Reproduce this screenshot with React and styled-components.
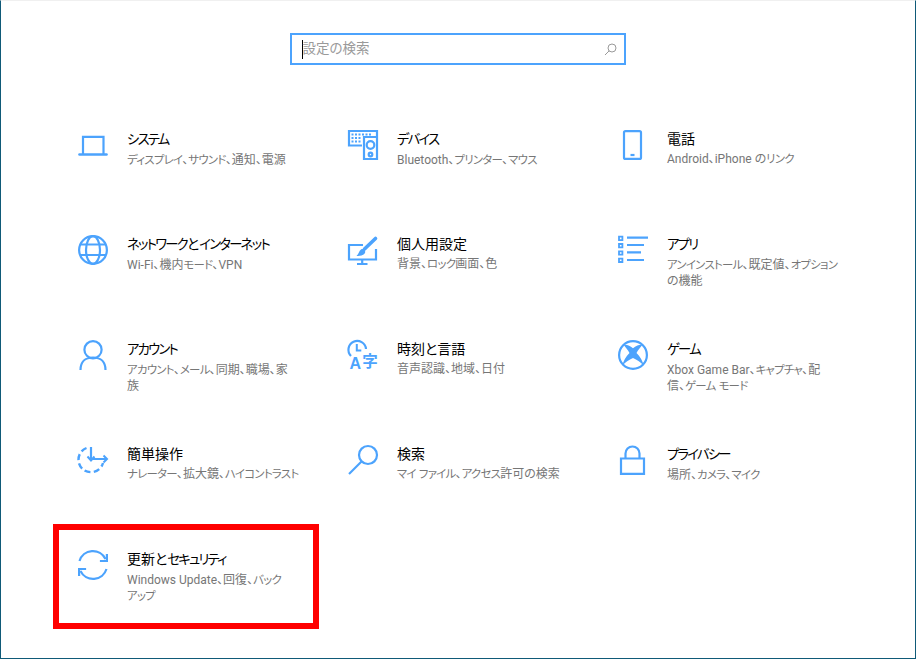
import React from "react";
import styled, { createGlobalStyle } from "styled-components";

const Global = createGlobalStyle`
  html, body { margin: 0; padding: 0; background: #fff; }
  * { box-sizing: border-box; }
`;
const FONT = `Roboto, "Noto Sans CJK JP", sans-serif`;
const ACCENT = "#4ca3fd";

const Page = styled.div`
  position: relative;
  width: 916px;
  height: 659px;
  background: #fff;
  border: 1px solid #0f5a78;
  border-top: 1px solid #f0f0f0;
  font-family: ${FONT};
  font-feature-settings: "palt";
  overflow: hidden;
`;
const SearchRow = styled.div`
  display: flex;
  justify-content: center;
  padding-top: 32px;
  padding-right: 1px;
`;
const SearchBox = styled.div`
  width: 336px;
  height: 32px;
  border: 2px solid ${ACCENT};
  display: flex;
  align-items: center;
  padding: 0 7px 0 10px;
  color: #9a9a9a;
  font-size: 13.5px;
`;
const Caret = styled.span`
  width: 1px;
  height: 19px;
  background: #000;
`;
const Placeholder = styled.span`
  flex: 1;
  margin-top: -4px;
`;
const Grid = styled.div`
  display: grid;
  grid-template-columns: repeat(3, 270px);
  grid-auto-rows: 105px;
  padding: 65px 0 0 77px;
`;
const Tile = styled.div`
  display: grid;
  grid-template-columns: 30px 1fr;
  column-gap: 19px;
  align-items: start;
`;
const IconWrap = styled.div`
  width: 30px;
  height: 30px;
  color: ${ACCENT};
`;
const TextCol = styled.div`
  margin-top: -1px;
`;
const Title = styled.div`
  font-size: 14px;
  line-height: 20px;
  color: #000;
`;
const Desc = styled.div`
  font-size: 12px;
  line-height: 16px;
  margin-top: 2px;
  color: #767676;
`;
const DescLine = styled.span`
  display: block;
  white-space: nowrap;
`;
const Kana = styled.span`
  font-size: 0.95em;
  letter-spacing: ${(p) => p.$track}em;
`;
const Highlight = styled.div`
  position: absolute;
  left: 52px;
  top: 523px;
  width: 266px;
  height: 105px;
  border: 6px solid #ff0000;
  pointer-events: none;
`;

const IconSvg = styled.svg`
  display: block;
  overflow: visible;
`;
const Svg = ({ children }) => (
  <IconSvg width="30" height="30" viewBox="0 0 30 30" fill="none" stroke="currentColor" strokeWidth="2.2">
    {children}
  </IconSvg>
);

const IconLabel = styled.text`
  font-family: "Liberation Sans", "Noto Sans CJK JP", sans-serif;
  fill: currentColor;
  stroke: none;
`;

const icons = {
  laptop: (
    <Svg>
      <path d="M5 24V6.800h20.500V24" />
      <path d="M1.500 24.500h27" strokeWidth="2.600" strokeLinecap="round" />
    </Svg>
  ),
  devices: (
    <Svg>
      <path d="M14 15.500H1V1h28v5" />
      <path d="M16 7h13v22H16z" />
      <circle cx="22.500" cy="15" r="3.800" />
      <circle cx="22.500" cy="24.500" r="1.800" />
      <path d="M3.500 4.500h2m1.500 0h2m1.500 0h2m1.500 0h2m1.500 0h2m1.500 0h2M3.500 8h2m1.500 0h2m1.500 0h2M3.500 11.500h2m1.500 0h2m1.500 0h2" strokeWidth="1.800" />
    </Svg>
  ),
  phone: (
    <Svg>
      <rect x="6" y="1.100" width="17" height="27.800" rx="1.500" />
      <path d="M12.500 25h4" />
    </Svg>
  ),
  globe: (
    <Svg>
      <circle cx="15" cy="15" r="13.900" />
      <ellipse cx="15" cy="15" rx="7" ry="13.900" />
      <path d="M2.500 9.500h25M2.500 20h25" />
    </Svg>
  ),
  personalize: (
    <Svg>
      <path d="M15 10H1v14.500h27V14" />
      <path d="M9 29h10.500M14.200 24.500V29" />
      <path d="M27.500 3.500 16.500 14" strokeWidth="3.600" strokeLinecap="round" />
      <path d="M13 14.500c2.500-1.300 5 1 4 3.500-1 2.300-6 3.500-8.500 2.800 2-1.300 2.500-5 4.500-6.300z" fill="currentColor" stroke="none" />
    </Svg>
  ),
  apps: (
    <Svg>
      <path d="M1 1.700h3.400v3.400H1zM1 9h3.400v3.400H1zM1 16.300h3.400v3.400H1zM1 23.600h3.400V27H1z" strokeWidth="1.800" />
      <path d="M9 2.700h21M9 10h17M9 17.300h14M9 25h17" />
    </Svg>
  ),
  person: (
    <Svg>
      <circle cx="15" cy="9.700" r="8.600" />
      <path d="M2.500 30c0-8 4.500-12.500 12.500-12.500S27.500 22 27.500 30" />
    </Svg>
  ),
  clockLang: (
    <Svg>
      <path d="M3 16A8.800 8.800 0 1 1 18 9" />
      <path d="M8.800 4v6.500h4.500" strokeWidth="2" />
      <IconLabel x="1.500" y="29" fontSize="16" fontWeight="700">A</IconLabel>
      <IconLabel x="14.300" y="26.500" fontSize="15.500" fontWeight="700">字</IconLabel>
    </Svg>
  ),
  xbox: (
    <Svg>
      <circle cx="15" cy="15" r="13.900" />
      <path d="M5.500 4.500C9 4.500 12.500 6 15 8.300 17.500 6 21 4.500 24.500 4.500 22.500 7.500 20 10 18.500 13 22 16.500 25 21 25.500 25.500 23 22.500 19 19.500 15 18 11 19.500 7 22.500 4.500 25.500 5 21 8 16.500 11.500 13 10 10 7.500 7.500 5.500 4.500Z" fill="currentColor" stroke="none" />
    </Svg>
  ),
  access: (
    <Svg>
      <path d="M13 2v13" />
      <path d="M9.500 11.500 13 15.500l3.500-4" strokeWidth="2" />
      <path d="M13 14h16M25.500 10.500 29 14l-3.500 3.500" strokeWidth="2" />
      <path d="M8.500 3A12.500 12.500 0 1 0 25 18" strokeWidth="2.400" strokeDasharray="6 3.300" />
    </Svg>
  ),
  search: (
    <Svg>
      <circle cx="20" cy="10" r="9" />
      <path d="M13.500 16.500 1 29" />
    </Svg>
  ),
  lock: (
    <Svg>
      <path d="M3 13.500h23v15.400H3z" />
      <path d="M7.500 13.500V8.500a7 7 0 0 1 14 0v5" />
    </Svg>
  ),
  update: (
    <Svg>
      <path d="M1.500 11A14 14 0 0 1 27.500 9" />
      <path d="M28.900 4v7h-7" />
      <path d="M28.500 19A14 14 0 0 1 2.500 21" />
      <path d="M1.100 26v-7h7" />
    </Svg>
  ),
};

const items = [
  ["laptop", "システム", "ディスプレイ、サウンド、通知、電源"],
  ["devices", "デバイス", "Bluetooth、プリンター、マウス"],
  ["phone", "電話", "Android、iPhone のリンク"],
  ["globe", "ネットワークとインターネット", "Wi-Fi、機内モード、VPN"],
  ["personalize", "個人用設定", "背景、ロック画面、色"],
  ["apps", "アプリ", "アンインストール、既定値、オプション\nの機能"],
  ["person", "アカウント", "アカウント、メール、同期、職場、家\n族"],
  ["clockLang", "時刻と言語", "音声認識、地域、日付"],
  ["xbox", "ゲーム", "Xbox Game Bar、キャプチャ、配\n信、ゲーム モード"],
  ["access", "簡単操作", "ナレーター、拡大鏡、ハイコントラスト"],
  ["search", "検索", "マイ ファイル、アクセス許可の検索"],
  ["lock", "プライバシー", "場所、カメラ、マイク"],
  ["update", "更新とセキュリティ", "Windows Update、回復、バック\nアップ"],
];

const Tight = ({ text, track }) =>
  text.split(/([\u30a0-\u30ff]+)/).map((part, i) =>
    i % 2 ? <Kana key={i} $track={track}>{part}</Kana> : part
  );

const SearchGlyph = () => (
  <svg width="13" height="13" viewBox="0 0 13 13" fill="none" stroke="#9a9a9a" strokeWidth="1">
    <circle cx="8" cy="5" r="4" />
    <path d="M5.200 7.800 1 12" />
  </svg>
);

export default function App() {
  return (
    <Page>
      <Global />
      <SearchRow>
        <SearchBox>
          <Caret />
          <Placeholder>設定の検索</Placeholder>
          <SearchGlyph />
        </SearchBox>
      </SearchRow>
      <Grid>
        {items.map(([icon, title, desc]) => (
          <Tile key={title}>
            <IconWrap>{icons[icon]}</IconWrap>
            <TextCol>
              <Title><Tight text={title} track={-0.13} /></Title>
              <Desc>
                {desc.split("\n").map((l) => (
                  <DescLine key={l}><Tight text={l} track={-0.06} /></DescLine>
                ))}
              </Desc>
            </TextCol>
          </Tile>
        ))}
      </Grid>
      <Highlight />
    </Page>
  );
}
